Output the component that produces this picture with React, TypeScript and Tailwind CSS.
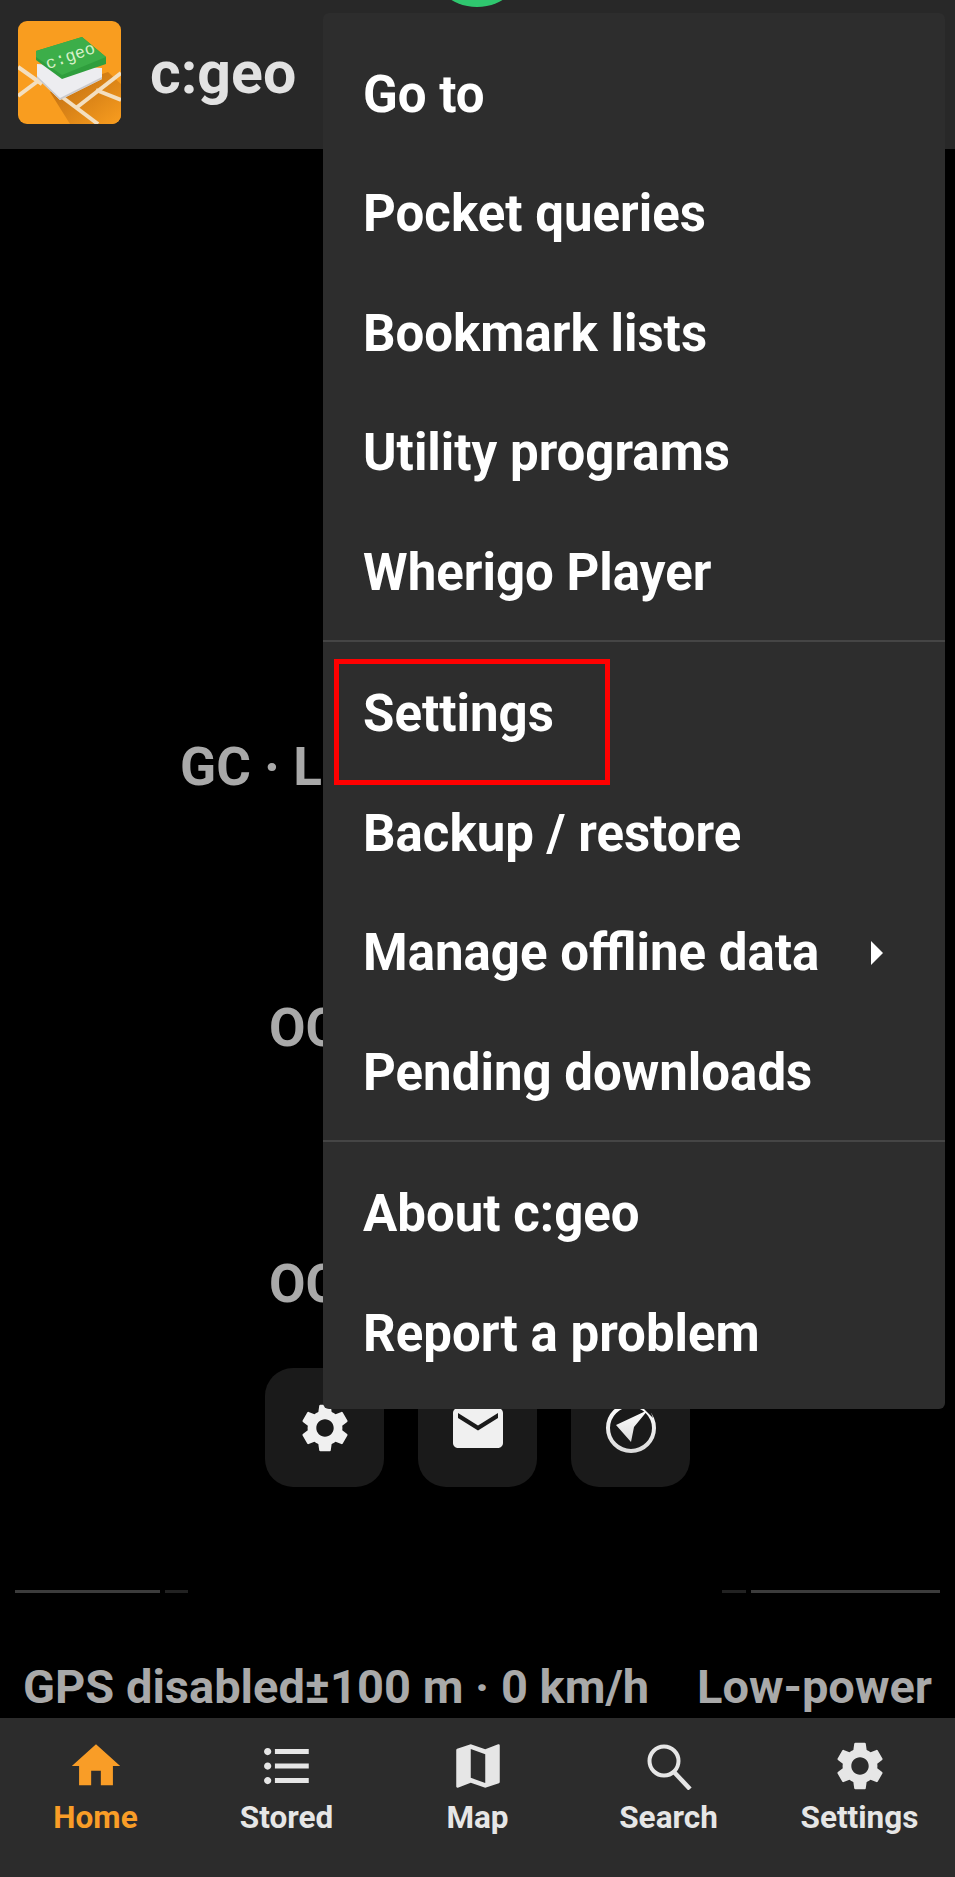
import React from "react";
import {
  MdHome,
  MdFormatListBulleted,
  MdMap,
  MdSettings,
  MdEmail,
} from "react-icons/md";

const firstGroup = ["Go to", "Pocket queries", "Bookmark lists", "Utility programs", "Wherigo Player"];
const lastGroup = ["About c:geo", "Report a problem"];

const Logo = () => (
  <svg viewBox="18 21 103 103" className="w-[103px] h-[103px] rounded-[9px] shrink-0 -mt-[4px]">
    <defs>
      <linearGradient id="shadow" x1="0" y1="0" x2="1" y2="1">
        <stop offset="0" stopColor="#b9690f" />
        <stop offset="1" stopColor="#f99d1f" />
      </linearGradient>
    </defs>
    <rect x="18" y="21" width="103" height="103" fill="#f99d1f" />
    <polygon points="50,92 108,72 121,84 121,124 70,124" fill="url(#shadow)" />
    <g stroke="#f3dfc0" strokeWidth="4" fill="none">
      <path d="M18 67 L42 84" />
      <path d="M18 96 L38 81" />
      <path d="M121 73 L76 108" />
      <path d="M62 97 L98 124" />
      <path d="M96 90 L121 100" />
    </g>
    <polygon points="37,64 37,78 60,100 102,79 102,68" fill="#ededf0" />
    <polygon points="37,76 60,98 102,77 102,79 60,100 37,78" fill="#c9c9cc" />
    <polygon points="36,51 82,37 106,57 106,64 62,79 36,60" fill="#2f9e3d" />
    <polygon points="36,51 82,37 106,57 62,75 36,57" fill="#3cae49" />
    <text
      x="71"
      y="61"
      fontFamily="'Liberation Mono', monospace"
      fontSize="17"
      fill="#d6f0c8"
      textAnchor="middle"
      transform="rotate(-19 71 58)"
    >
      c:geo
    </text>
  </svg>
);

const CompassIcon = () => (
  <svg viewBox="0 0 52 52" className="w-[52px] h-[52px]">
    <defs>
      <linearGradient id="fade" x1="0" y1="0" x2="0" y2="1">
        <stop offset="0" stopColor="#ffffff" />
        <stop offset="1" stopColor="#dcdcdc" />
      </linearGradient>
    </defs>
    <circle cx="26" cy="26" r="23" fill="none" stroke="url(#fade)" strokeWidth="4" />
    <polygon points="43,8 11,23 26,40 29,25" fill="url(#fade)" />
    <polygon points="43,2 36,4 48,16" fill="#1a1a1a" />
  </svg>
);

const SearchIcon = () => (
  <svg viewBox="0 0 48 48" className="w-[48px] h-[48px]" fill="none" stroke="#e6e6e6">
    <circle cx="19" cy="19" r="14.5" strokeWidth="4" />
    <path d="M29 30 L45 47" strokeWidth="4.5" />
  </svg>
);

const MenuItem = ({ label, arrow }: { label: string; arrow?: boolean }) => (
  <div className="h-[119.5px] flex items-center justify-between pl-[40px] pr-[62px] pt-[2px]">
    <span className="text-[51px] font-bold text-white whitespace-nowrap">{label}</span>
    {arrow && (
      <span className="w-0 h-0 border-y-[12px] border-y-transparent border-l-[12px] border-l-white" />
    )}
  </div>
);

const navItems = [
  { label: "Home", icon: <MdHome size={58} color="#f99d27" />, active: true },
  { label: "Stored", icon: <MdFormatListBulleted size={58} color="#e6e6e6" /> },
  { label: "Map", icon: <MdMap size={58} color="#e6e6e6" /> },
  { label: "Search", icon: <SearchIcon /> },
  { label: "Settings", icon: <MdSettings size={58} color="#e6e6e6" /> },
];

const App = () => {
  return (
    <div className="relative w-[955px] h-[1877px] bg-black overflow-hidden flex flex-col font-['Roboto',sans-serif]">
      <header className="h-[149px] shrink-0 bg-[#282828] flex items-center pl-[18px] gap-[29px]">
        <Logo />
        <span className="text-[59px] font-bold text-[#e2e2e2] -mt-[2px]">c:geo</span>
      </header>

      <main className="flex-1 flex flex-col">
        <p className="mt-[591px] pl-[180px] h-[54px] leading-[54px] text-[53px] font-bold text-[#a9a9a9] whitespace-nowrap">
          GC · L
        </p>
        <p className="mt-[207px] pl-[269px] h-[54px] leading-[54px] text-[53px] font-bold text-[#a9a9a9] whitespace-nowrap">
          OC
        </p>
        <p className="mt-[202px] pl-[269px] h-[54px] leading-[54px] text-[53px] font-bold text-[#a9a9a9] whitespace-nowrap">
          OC
        </p>

        <div className="mt-[57px] flex justify-center gap-[34px]">
          <div className="w-[119px] h-[119px] rounded-[28px] bg-[#1a1a1a] flex items-center justify-center">
            <MdSettings size={58} color="#f0f0f0" />
          </div>
          <div className="w-[119px] h-[119px] rounded-[28px] bg-[#1a1a1a] flex items-center justify-center">
            <MdEmail size={60} color="#f0f0f0" />
          </div>
          <div className="w-[119px] h-[119px] rounded-[28px] bg-[#1a1a1a] flex items-center justify-center">
            <CompassIcon />
          </div>
        </div>

        <div className="mt-[103px] flex justify-between px-[15px]">
          <div className="flex gap-[5px]">
            <div className="w-[145px] h-[3px] bg-[#3c3c3c]" />
            <div className="w-[23px] h-[3px] bg-[#222222]" />
          </div>
          <div className="flex gap-[5px]">
            <div className="w-[24px] h-[3px] bg-[#222222]" />
            <div className="w-[189px] h-[3px] bg-[#3c3c3c]" />
          </div>
        </div>

        <div className="mt-auto mb-[4px] flex justify-between pl-[23px] pr-[23px] text-[47px] leading-[54px] font-bold text-[#a9a9a9] whitespace-nowrap">
          <span>GPS disabled±100 m · 0 km/h</span>
          <span>Low‑power</span>
        </div>
      </main>

      <nav className="h-[159px] shrink-0 bg-[#2c2c2c] grid grid-cols-5">
        {navItems.map((item) => (
          <div key={item.label} className="flex flex-col items-center pt-[19px]">
            <div className="h-[58px] flex items-center justify-center">{item.icon}</div>
            <span
              className={`mt-[6px] text-[31.5px] leading-[34px] font-bold ${
                item.active ? "text-[#f99d27]" : "text-[#e6e6e6]"
              }`}
            >
              {item.label}
            </span>
          </div>
        ))}
      </nav>

      {/* overflow menu */}
      <div className="absolute left-[323px] top-[13px] w-[622px] h-[1396px] rounded-[6px] bg-[#2d2d2d] pt-[21px]">
        {firstGroup.map((label) => (
          <MenuItem key={label} label={label} />
        ))}
        <div className="mt-[8px] mb-[12px] h-[2px] bg-[#454545]" />
        <div className="relative">
          <MenuItem label="Settings" />
          <div className="absolute left-[11px] top-[5px] w-[276px] h-[126px] border-[5px] border-[#ff0000]" />
        </div>
        <MenuItem label="Backup / restore" />
        <MenuItem label="Manage offline data" arrow />
        <MenuItem label="Pending downloads" />
        <div className="mt-[8px] mb-[12px] h-[2px] bg-[#454545]" />
        {lastGroup.map((label) => (
          <MenuItem key={label} label={label} />
        ))}
      </div>

      {/* status bar indicator */}
      <div className="absolute left-[427px] top-[-93px] w-[100px] h-[100px] rounded-full bg-[#2fc76f]" />
    </div>
  );
};

export default App;
